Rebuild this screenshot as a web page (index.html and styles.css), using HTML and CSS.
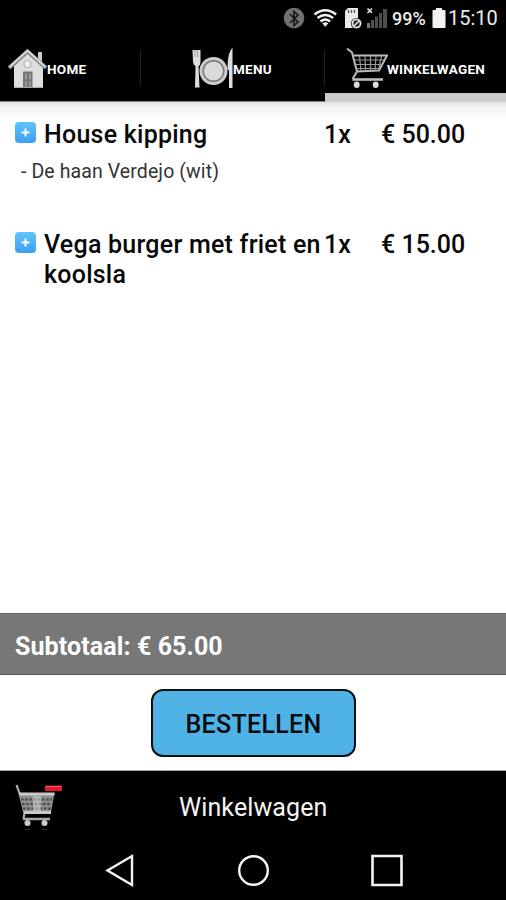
FILE: index.html
```html
<!DOCTYPE html>
<html lang="nl">
<head>
<meta charset="utf-8">
<title>Winkelwagen</title>
<link rel="stylesheet" href="styles.css">
</head>
<body>
<div class="screen">
  <header class="status">
    <svg class="status-icons" width="106" height="26" viewBox="283 5 106 26">
      <circle cx="294" cy="17" r="10.3" fill="#707070"/>
      <path d="M290 13l8 8-4 3.500v-14l4 3.500-8 8" fill="none" stroke="#151515" stroke-width="1.600"/>
      <g fill="none" stroke="#f2f2f2" stroke-width="2.400">
        <path d="M314.500 13.500q10.800-8.500 21.600 0"/>
        <path d="M317.500 17q7.800-6 15.600 0"/>
        <path d="M320.500 20.500q4.800-3.800 9.600 0"/>
      </g>
      <path d="M322.300 22.300q3-2 6 0l-3 3.500z" fill="#f2f2f2"/>
      <path d="M345 10l3-3h10v20h-13z" fill="#e9e9e9"/>
      <path d="M348.500 9v3m3-3v3m3-3v3" stroke="#555" stroke-width="1.300"/>
      <circle cx="356.500" cy="22.500" r="5.600" fill="#222"/>
      <circle cx="356.500" cy="22.500" r="4" fill="none" stroke="#e9e9e9" stroke-width="1.700"/>
      <path d="M354 25l5-5" stroke="#e9e9e9" stroke-width="1.500"/>
      <path d="M367.500 7.500l4.500 4.500m0-4.500l-4.500 4.500" stroke="#ddd" stroke-width="1.700"/>
      <path d="M367 22h3v5h-3z" fill="#777"/>
      <path d="M371 19h3v8h-3zM375 15.500h3v11.500h-3zM379 12h3v15h-3zM383 8h4v19h-4z" fill="#4e4e4e"/>
    </svg>
    <span class="percent">99%</span>
    <svg class="battery" width="14" height="20" viewBox="0 0 14 20"><path d="M4 0h6v2h2.500q1 0 1 1v16q0 1-1 1h-11q-1 0-1-1v-16q0-1 1-1h2.500z" fill="#f3f3f3"/></svg>
    <span class="clock">15:10</span>
  </header>

  <nav class="tabs">
    <a class="tab home">
      <svg width="39" height="41" viewBox="8 47 39 41">
        <path d="M38 51h4v14h-4z" fill="#ccc"/>
        <path d="M14 65L27.500 52 43 66v21H14z" fill="#dedede"/>
        <path d="M9 67L27.500 50.500 46 67" fill="none" stroke="#8a8a8a" stroke-width="4"/>
        <path d="M9.500 66L27.500 49.500 45.500 66" fill="none" stroke="#d8d8d8" stroke-width="1.800"/>
        <circle cx="27.500" cy="63" r="3.700" fill="#eee" stroke="#aaa"/>
        <path d="M23 70.500h9.500V87H23z" fill="#777"/>
        <path d="M25 72.500h2v6h-2zm4 0h2v6h-2zm-4 8h2v5h-2zm4 0h2v5h-2z" fill="#999"/>
        <path d="M14 86.500h29" stroke="#aaa"/>
      </svg>
      <span class="label">HOME</span>
    </a>
    <a class="tab menu">
      <svg width="42" height="42" viewBox="191 47 42 42">
        <path d="M192.500 50h8v12q0 3-2 4l1 21.500h-4.500l.5-21.500q-2-1-2.500-4z" fill="#ddd"/>
        <path d="M195 50v7m2.500-7v7" stroke="#888" stroke-width=".8"/>
        <path d="M232.500 48v40h-3.500V70h-1.500q0-18 5-22z" fill="#ddd"/>
        <circle cx="213.500" cy="71" r="14" fill="#ccc"/>
        <circle cx="213.500" cy="71" r="10.300" fill="#dadada" stroke="#777" stroke-width="1.500"/>
      </svg>
      <span class="label">MENU</span>
    </a>
    <a class="tab cart active">
      <svg width="42" height="42" viewBox="346 47 42 42">
        <g fill="none" stroke="#bbb" stroke-width="2">
          <path d="M347 48.500l5 4 5 19-4.500 7.500"/>
          <path d="M353.500 55.500H387L379 70.500l-23 1"/>
          <path d="M352.500 79.500H383" stroke-width="2.600"/>
        </g>
        <path d="M354.500 60H384M355.500 64.500H382M356.500 68.500H380M359.500 56l1.500 15M365 56l.5 15M370.500 56v15M376 56l-1 15M381.500 56l-3 14" fill="none" stroke="#999" stroke-width="1.200"/>
        <ellipse cx="356.700" cy="84.800" rx="2.900" ry="3.300" fill="#ddd"/>
        <ellipse cx="375.700" cy="84.800" rx="2.900" ry="3.300" fill="#ddd"/>
      </svg>
      <span class="label">WINKELWAGEN</span>
    </a>
  </nav>

  <main class="list">
    <section class="item">
      <div class="row">
        <span class="plus"><svg width="21" height="21" viewBox="0 0 21 21"><path d="M10.500 6.500v8M6.500 10.500h8" stroke="#fff" stroke-width="1.900"/></svg></span>
        <h2 class="name">House kipping</h2>
        <span class="qty">1x</span>
        <span class="price">€ 50.00</span>
      </div>
      <p class="extra">- De haan Verdejo (wit)</p>
    </section>
    <section class="item">
      <div class="row">
        <span class="plus"><svg width="21" height="21" viewBox="0 0 21 21"><path d="M10.500 6.500v8M6.500 10.500h8" stroke="#fff" stroke-width="1.900"/></svg></span>
        <h2 class="name">Vega burger met friet en<br>koolsla</h2>
        <span class="qty">1x</span>
        <span class="price">€ 15.00</span>
      </div>
    </section>
  </main>

  <div class="subtotal"><span>Subtotaal: € 65.00</span></div>
  <div class="order"><button class="order-button">BESTELLEN</button></div>

  <footer class="title-bar">
    <svg class="title-cart" width="50" height="48" viewBox="14 784 50 48">
      <path d="M45 786.500h17v5.500H45z" fill="#e0192b"/>
      <path d="M46 787.500h15" stroke="#f45a61"/>
      <path d="M16.500 786l3 8 5 20-1 5.500" fill="none" stroke="#aaa" stroke-width="2.200"/>
      <path d="M19 794h35.500l-3.500 20H24z" fill="#8d8d8d"/>
      <path d="M21 800.500h31M22 805h29M23 809.500h28" stroke="#444" stroke-width="2" stroke-dasharray="2.500 1.700"/>
      <path d="M33 797h8v16h-8z" fill="#ddd" opacity=".5"/>
      <path d="M19 795h35.500M24 813.500h27" stroke="#c9c9c9" stroke-width="2.800"/>
      <path d="M23 820h27" stroke="#aaa" stroke-width="2.500"/>
      <circle cx="27.500" cy="824" r="3" fill="#ccc"/>
      <circle cx="44.500" cy="824" r="3" fill="#ccc"/>
      <path d="M25 830.500h5m12 0h5" stroke="#333"/>
    </svg>
    <span class="title">Winkelwagen</span>
  </footer>
  <nav class="system">
    <svg width="30" height="34" viewBox="0 0 30 34"><path d="M27 3v29L2.500 17.500z" fill="none" stroke="#f4f4f4" stroke-width="2.400"/></svg>
    <svg width="34" height="34" viewBox="0 0 34 34"><circle cx="17.500" cy="17.500" r="14.300" fill="none" stroke="#f4f4f4" stroke-width="2.400"/></svg>
    <svg width="34" height="34" viewBox="0 0 34 34"><path d="M2.500 3h29v29h-29z" fill="none" stroke="#f4f4f4" stroke-width="2.600"/></svg>
  </nav>
</div>
</body>
</html>
```

FILE: styles.css
```css
* { box-sizing: border-box; }
body { margin: 0; background: #000; font-family: Roboto, "Liberation Sans", sans-serif; }
svg { display: block; flex: none; }
.screen { width: 506px; height: 900px; display: flex; flex-direction: column; overflow: hidden; background: #fff; }

.status { height: 36px; flex: none; background: #000; color: #ececec; display: flex; align-items: center; padding-left: 283px; white-space: nowrap; }
.status-icons { margin-top: 1px; }
.percent { width: 35px; margin-left: 3px; font-size: 18px; font-weight: 500; }
.battery { margin-left: 5px; }
.clock { margin-left: 2px; font-size: 20px; }

.tabs { height: 66px; flex: none; display: flex; background: #000; border-bottom: 1px solid #888; }
.tab { display: flex; align-items: center; height: 65px; padding-bottom: 1px; color: #fff; font-size: 13.500px; font-weight: 700; letter-spacing: .3px; white-space: nowrap; background: linear-gradient(#222, #222) right 14px / 1px 35px no-repeat; }
.home { width: 141px; padding-left: 8px; }
.menu { width: 184px; padding-left: 50px; }
.cart { width: 181px; height: 66px; padding: 0 0 2px 21px; }
.tab.active { background: linear-gradient(#ccc, #ccc) 0 bottom / 100% 9px no-repeat; }
.label { margin-top: 1px; }
.cart .label { margin-left: -1px; }

.list { flex: 1; padding: 18px 0 0 15px; background: linear-gradient(#e2e2e2, #f4f4f4 7px, #fff 18px); }
.item { height: 110px; }
.row { display: flex; align-items: flex-start; color: #080808; font-size: 25px; font-weight: 500; line-height: 30px; white-space: nowrap; }
.plus { flex: none; width: 21px; height: 21px; margin: 2px 8px 0 0; border-radius: 4px; background: linear-gradient(#62c5fa, #3c9ff0); }
.name { width: 280px; margin: 0; font: inherit; letter-spacing: .24px; }
.qty { width: 57px; }
.extra { margin: 10px 0 0 6px; color: #333; font-size: 19.500px; line-height: 24px; letter-spacing: .1px; }

.subtotal { height: 62px; flex: none; display: flex; align-items: center; padding: 5px 0 0 15px; background: #777; border-top: 1px solid #666; border-bottom: 1px solid #555; color: #fff; font-size: 25px; font-weight: 700; letter-spacing: .1px; }
.order { height: 96px; flex: none; padding: 14px 0 0 151px; border-bottom: 1px solid #aaa; }
.order-button { display: block; width: 205px; height: 68px; padding: 2px 0 0; border: 2px solid #0a0f12; border-radius: 12px; background: #50b3e6; color: #060b0f; font: 500 25px Roboto, sans-serif; letter-spacing: .3px; }
.title-bar { height: 72px; flex: none; background: #000; display: flex; align-items: center; padding-left: 14px; color: #f5f5f5; font-size: 25px; }
.title { margin-left: 115px; letter-spacing: .1px; }
.system { height: 57px; flex: none; background: #000; display: flex; padding: 10px 102px 0 105px; justify-content: space-between; }
```
